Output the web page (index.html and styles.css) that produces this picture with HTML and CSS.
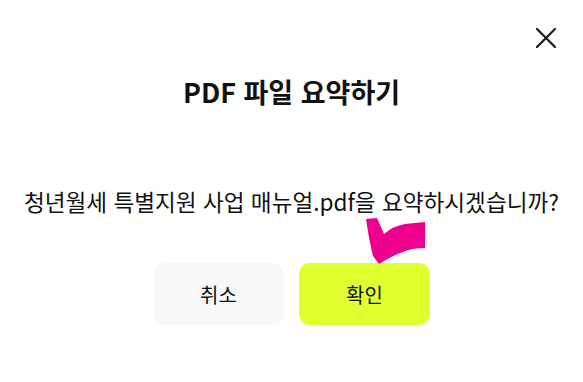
FILE: index.html
```html
<!DOCTYPE html>
<html lang="ko">
<head>
<meta charset="utf-8">
<link rel="stylesheet" href="styles.css">
</head>
<body>
<div class="dialog">
  <button class="close" aria-label="닫기">
    <svg width="22" height="22" viewBox="0 0 22 22"><path d="M2 2 L20 20 M20 2 L2 20" stroke="#1a1a1a" stroke-width="2.2" stroke-linecap="round" fill="none"/></svg>
  </button>
  <h1 class="title">PDF 파일 요약하기</h1>
  <p class="message">청년월세 특별지원 사업 매뉴얼.pdf을 요약하시겠습니까?</p>
  <div class="actions">
    <button class="btn cancel">취소</button>
    <button class="btn confirm">확인
      <svg class="mark" width="62" height="48" viewBox="0 0 62 48"><path d="M1 1 L12 0 L19 16 Q28 8 40 6 L60 4 L60 30 Q46 30 38 34 Q26 38 14 46 L8 38 Q4 22 1 1 Z" fill="#ec008c"/></svg>
    </button>
  </div>
</div>
</body>
</html>
```

FILE: styles.css
```css
* { box-sizing: border-box; }
html, body { margin: 0; padding: 0; background: #fff; }
body { font-family: "Noto Sans CJK KR", "Noto Sans", sans-serif; color: #111; }
.dialog {
  position: relative;
  width: 583px;
  height: 382px;
  display: flex;
  flex-direction: column;
  align-items: center;
  padding-top: 74px;
}
.close {
  position: absolute;
  top: 27px;
  right: 26px;
  padding: 0;
  border: 0;
  background: none;
  line-height: 0;
}
.title {
  margin: 0;
  font-size: 27px;
  font-weight: 700;
  line-height: 36px;
}
.message {
  margin: 76px 0 0;
  font-size: 22.6px;
  line-height: 32px;
  font-weight: 400;
  white-space: nowrap;
}
.actions {
  margin-top: 45px;
  display: flex;
  gap: 15px;
}
.btn {
  position: relative;
  width: 131px;
  height: 62px;
  border: 0;
  border-radius: 11px;
  font-family: inherit;
  font-size: 20px;
  color: #111;
}
.cancel { background: #f7f8fa; }
.confirm { background: #e0ff2e; }
.mark {
  position: absolute;
  left: 66px;
  top: -45px;
}
```
